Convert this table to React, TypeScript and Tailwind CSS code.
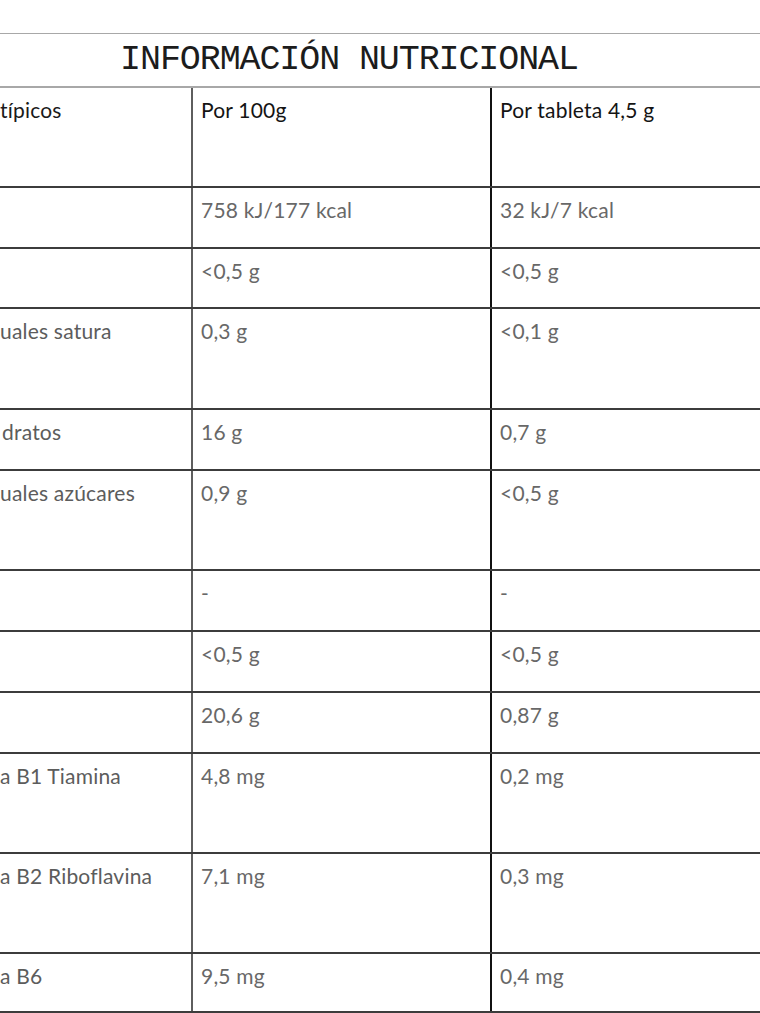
import React from "react";

type Row = { a: string; b: string; c: string; h: string; head?: boolean; pad?: string };

const rows: Row[] = [
  { a: "típicos", b: "Por 100g", c: "Por tableta 4,5 g", h: "h-[100px]", head: true },
  { a: "", b: "758 kJ/177 kcal", c: "32 kJ/7 kcal", h: "h-[61px]" },
  { a: "", b: "<0,5 g", c: "<0,5 g", h: "h-[60px]" },
  { a: "uales satura", b: "0,3 g", c: "<0,1 g", h: "h-[101px]" },
  { a: "dratos", b: "16 g", c: "0,7 g", h: "h-[61px]", pad: "pl-[94px]" },
  { a: "uales azúcares", b: "0,9 g", c: "<0,5 g", h: "h-[100px]" },
  { a: "", b: "-", c: "-", h: "h-[61px]" },
  { a: "", b: "<0,5 g", c: "<0,5 g", h: "h-[61px]" },
  { a: "", b: "20,6 g", c: "0,87 g", h: "h-[61px]" },
  { a: "a B1 Tiamina", b: "4,8 mg", c: "0,2 mg", h: "h-[100px]" },
  { a: "a B2 Riboflavina", b: "7,1 mg", c: "0,3 mg", h: "h-[100px]" },
  { a: "a B6", b: "9,5 mg", c: "0,4 mg", h: "h-[59px]" },
];

export default function App() {
  return (
    <div className="w-[760px] h-[1013px] overflow-hidden bg-white">
      <div className="mt-[33px] -ml-[92px] w-[882px]">
        <div className="h-[55px] border-t border-b-2 border-[#a8a8a8] flex items-center justify-center">
          <span
            className="text-[35px] leading-[51px] tracking-[-1.1px] text-[#1c1c1c]"
            style={{ fontFamily: '"Liberation Mono", monospace' }}
          >
            INFORMACIÓN NUTRICIONAL
          </span>
        </div>
        {rows.map((r, i) => (
          <div
            key={i}
            className={`${r.h} flex border-b-2 border-[#3c3c3c] text-[21px] leading-[24px] tracking-[0.2px]`}
            style={{ fontFamily: 'Lato, "Open Sans", sans-serif' }}
          >
            <div
              className={`w-[283px] shrink-0 pr-2 pt-[10px] whitespace-nowrap ${r.pad ?? "pl-[92px]"} ${
                r.head ? "text-[#1a1a1a]" : "text-[#5c5c5c]"
              }`}
            >
              {r.a}
            </div>
            <div
              className={`w-[299px] shrink-0 border-l-2 border-[#5e5e5e] pl-2 pt-[10px] ${
                r.head ? "text-[#141414]" : "text-[#686868]"
              }`}
            >
              {r.b}
            </div>
            <div
              className={`flex-1 border-l-2 border-[#111111] pl-2 pt-[10px] ${
                r.head ? "text-[#141414]" : "text-[#686868]"
              }`}
            >
              {r.c}
            </div>
          </div>
        ))}
      </div>
    </div>
  );
}
